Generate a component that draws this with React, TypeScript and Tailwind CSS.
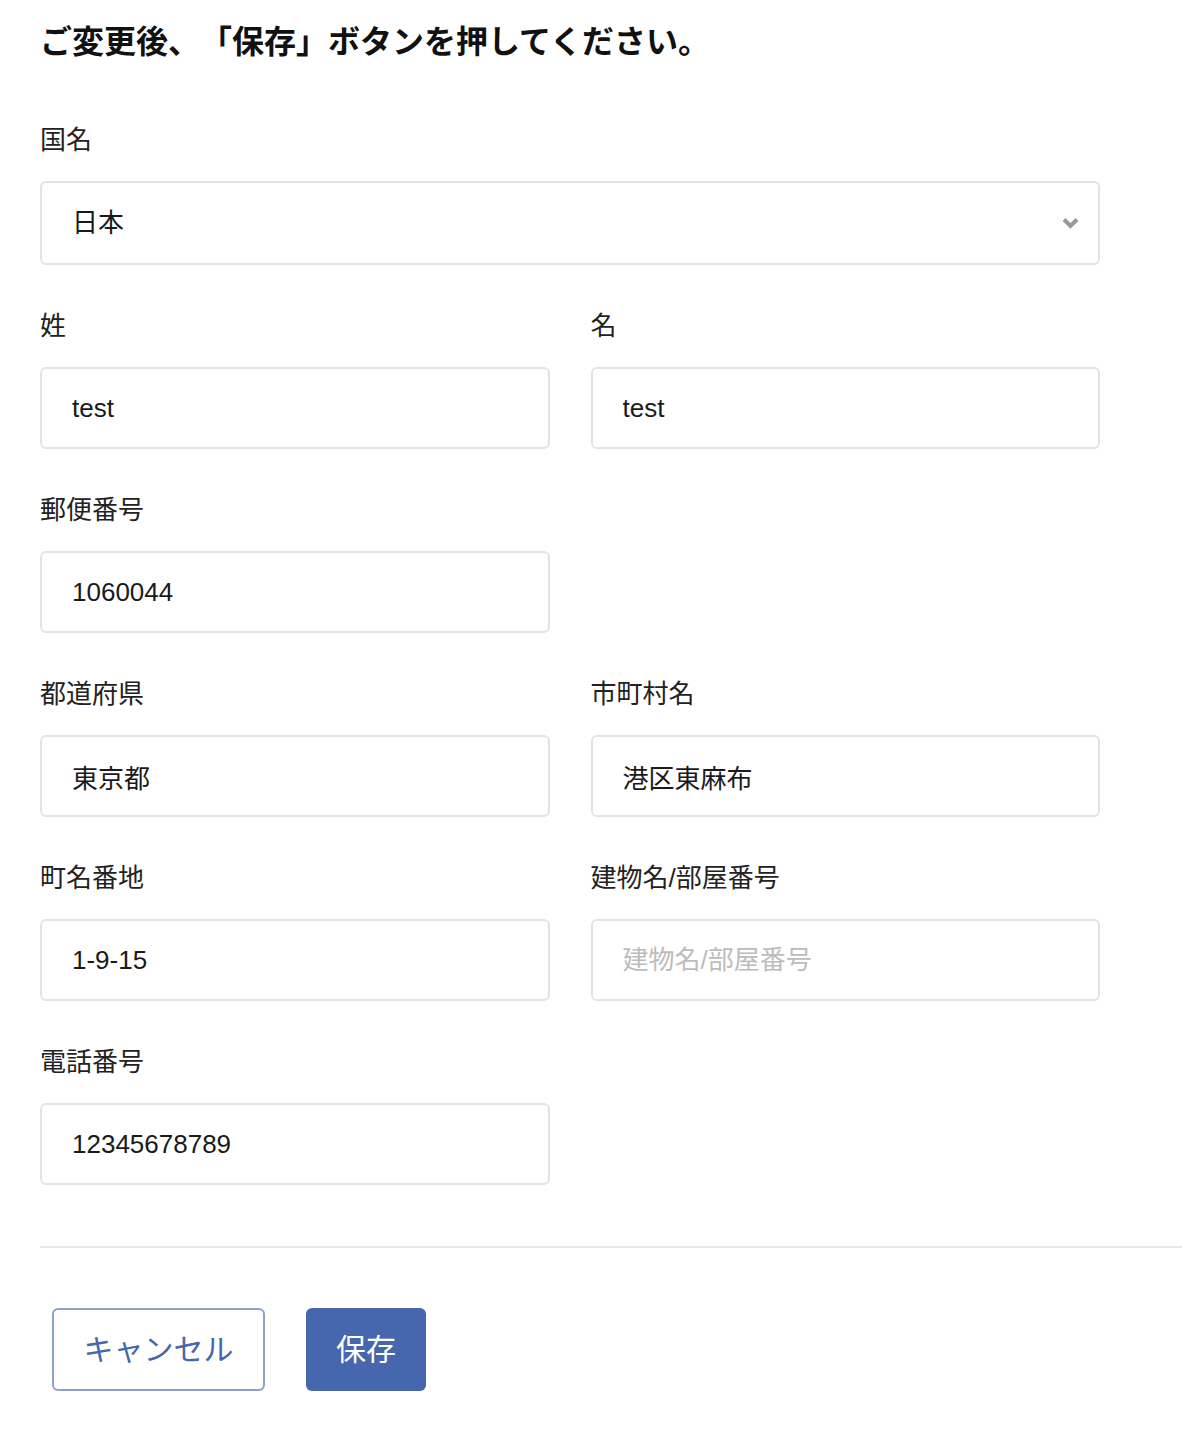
import React from 'react'

const font = { fontFamily: '"Liberation Sans", "Noto Sans CJK JP", sans-serif' }

interface FieldProps {
  label: string
  value?: string
  placeholder?: string
}

function Field({ label, value, placeholder }: FieldProps): React.JSX.Element {
  return (
    <div className="flex flex-col">
      <label className="h-[40px] text-[26px] leading-[40px] text-[#222]">{label}</label>
      <input
        readOnly
        value={value ?? ''}
        placeholder={placeholder}
        className="mt-[21px] h-[82px] w-full rounded-[6px] border-2 border-[#e3e3e3] bg-white pl-[30px] text-[26px] text-[#1a1a1a] outline-none placeholder:text-[#bcbcbc]"
        style={font}
      />
    </div>
  )
}

export default function App(): React.JSX.Element {
  return (
    <div className="min-h-[1434px] bg-white pl-[40px] pt-[18px]" style={font}>
      <h1 className="text-[32px] font-bold leading-[48px] text-[#111] [text-spacing-trim:space-all]">
        ご変更後、「保存」ボタンを押してください。
      </h1>

      <div className="w-[1060px]">
        <div className="mt-[54px] flex flex-col">
          <label className="h-[40px] text-[26px] leading-[40px] text-[#222]">国名</label>
          <div className="relative mt-[21px]">
            <select
              className="h-[84px] w-full appearance-none rounded-[6px] border-2 border-[#e3e3e3] bg-white pl-[30px] text-[26px] text-[#1a1a1a] outline-none"
              style={font}
              defaultValue="jp"
            >
              <option value="jp">日本</option>
            </select>
            <svg
              className="pointer-events-none absolute right-[21px] top-[36px]"
              width="17"
              height="12"
              viewBox="0 0 17 12"
              fill="none"
            >
              <path d="M2 2.5l6.5 6.5L15 2.5" stroke="#999" strokeWidth="4" />
            </svg>
          </div>
        </div>

        <div className="mt-[41px] grid grid-cols-2 gap-x-[41px] gap-y-[41px]">
          <Field label="姓" value="test" />
          <Field label="名" value="test" />
          <Field label="郵便番号" value="1060044" />
          <div />
          <Field label="都道府県" value="東京都" />
          <Field label="市町村名" value="港区東麻布" />
          <Field label="町名番地" value="1-9-15" />
          <Field label="建物名/部屋番号" placeholder="建物名/部屋番号" />
          <Field label="電話番号" value="12345678789" />
          <div />
        </div>
      </div>

      <div className="mt-[61px] h-[2px] bg-[#e9e9e9]" />

      <div className="ml-[12px] mt-[60px] flex gap-[41px]">
        <button
          className="h-[83px] w-[213px] rounded-[6px] border-2 border-[#8ca1cc] bg-white text-[30px] text-[#4666ad]"
          style={font}
        >
          キャンセル
        </button>
        <button
          className="h-[83px] w-[120px] rounded-[6px] bg-[#4666ad] text-[30px] text-white"
          style={font}
        >
          保存
        </button>
      </div>
    </div>
  )
}
